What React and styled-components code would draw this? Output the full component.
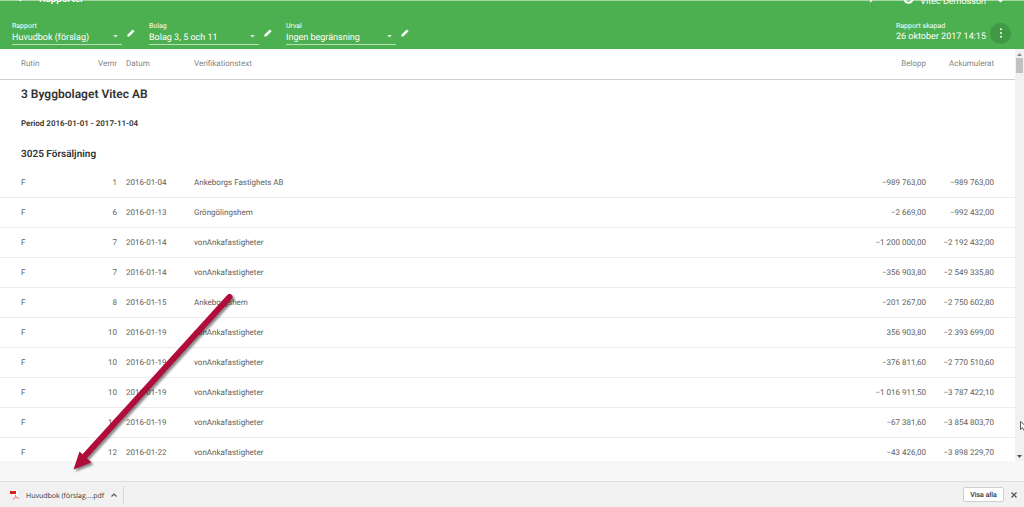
import React from 'react';
import styled, { createGlobalStyle } from 'styled-components';

const filters = [
  { id: 'rapport', label: 'Rapport', value: 'Huvudbok (förslag)' },
  { id: 'bolag', label: 'Bolag', value: 'Bolag 3, 5 och 11' },
  { id: 'urval', label: 'Urval', value: 'Ingen begränsning' },
];

const rows = [
  ['F', '1', '2016-01-04', 'Ankeborgs Fastighets AB', '−989 763,00', '−989 763,00'],
  ['F', '6', '2016-01-13', 'Gröngölingshem', '−2 669,00', '−992 432,00'],
  ['F', '7', '2016-01-14', 'vonAnkafastigheter', '−1 200 000,00', '−2 192 432,00'],
  ['F', '7', '2016-01-14', 'vonAnkafastigheter', '−356 903,80', '−2 549 335,80'],
  ['F', '8', '2016-01-15', 'Ankeborgshem', '−201 267,00', '−2 750 602,80'],
  ['F', '10', '2016-01-19', 'vonAnkafastigheter', '356 903,80', '−2 393 699,00'],
  ['F', '10', '2016-01-19', 'vonAnkafastigheter', '−376 811,60', '−2 770 510,60'],
  ['F', '10', '2016-01-19', 'vonAnkafastigheter', '−1 016 911,50', '−3 787 422,10'],
  ['F', '11', '2016-01-19', 'vonAnkafastigheter', '−67 381,60', '−3 854 803,70'],
  ['F', '12', '2016-01-22', 'vonAnkafastigheter', '−43 426,00', '−3 898 229,70'],
];

const App = () => {
  return (
    <Page>
      <GlobalStyle />
      <Header>
        <TopBar>
          <BackButton aria-label="Tillbaka">
            <svg width="9" height="9" viewBox="0 0 9 9" fill="none" stroke="#fff" strokeWidth="1.2">
              <path d="M8.500 4.500h-7M5 .8 1.300 4.500 5 8.200" />
            </svg>
          </BackButton>
          <PageTitle>Rapporter</PageTitle>
          <User>
            <UserChevron width="6" height="9" viewBox="0 0 6 9" fill="none" stroke="#fff" strokeWidth="1.2">
              <path d="M1 2l3 3-3 3" />
            </UserChevron>
            <UserIcon width="11" height="11" viewBox="0 0 11 11" fill="none" stroke="#fff" strokeWidth="2">
              <circle cx="5.5" cy="5.5" r="4.2" />
            </UserIcon>
            Vitec Demosson
            <UserCaret width="5" height="3" viewBox="0 0 5 3">
              <path d="M0 0h5L2.5 2.500z" fill="#fff" />
            </UserCaret>
          </User>
        </TopBar>
        <FilterBar>
          {filters.map((filter) => (
            <Filter key={filter.id}>
              <Field>
                <Label htmlFor={filter.id}>{filter.label}</Label>
                <SelectWrap>
                  <Select id={filter.id}>
                    <option>{filter.value}</option>
                  </Select>
                  <svg width="5" height="3" viewBox="0 0 5 3">
                    <path d="M0 0h5L2.5 2.5z" fill="#d3ecd4" />
                  </svg>
                </SelectWrap>
              </Field>
              <EditButton aria-label="Redigera">
                <svg width="8" height="8" viewBox="0 0 8 8" fill="#fff">
                  <path d="M.4 7.600V5.700L5.800.4 7.600 2.200 2.200 7.600z" />
                </svg>
              </EditButton>
            </Filter>
          ))}
          <Created>
            <Label as="span">Rapport skapad</Label>
            <CreatedDate>26 oktober 2017 14:15</CreatedDate>
          </Created>
          <MoreButton aria-label="Mer">
            <svg width="4" height="10" viewBox="0 0 4 10" fill="#fff">
              <circle cx="2" cy="1.3" r="1" />
              <circle cx="2" cy="5" r="1" />
              <circle cx="2" cy="8.7" r="1" />
            </svg>
          </MoreButton>
        </FilterBar>
      </Header>
      <Report>
        <TableArea>
          <Table>
            <colgroup>
              <Col $width="80px" />
              <Col $width="37px" />
              <Col $width="68px" />
              <Col />
              <Col $width="80px" />
              <Col $width="89px" />
            </colgroup>
            <thead>
              <tr>
                <Th>Rutin</Th>
                <Th $right>Vernr</Th>
                <Th>Datum</Th>
                <Th>Verifikationstext</Th>
                <Th $right>Belopp</Th>
                <Th $right>Ackumulerat</Th>
              </tr>
            </thead>
            <tbody>
              <tr>
                <Heading colSpan="6" $size="12px">3 Byggbolaget Vitec AB</Heading>
              </tr>
              <tr>
                <Heading colSpan="6" $size="8px">Period 2016-01-01 - 2017-11-04</Heading>
              </tr>
              <tr>
                <AccountHeading colSpan="6" $size="10px">3025 Försäljning</AccountHeading>
              </tr>
              {rows.map((row, i) => (
                <tr key={i}>
                  {row.map((cell, j) => (
                    <Td key={j} $right={j === 1 || j > 3}>
                      {cell}
                    </Td>
                  ))}
                </tr>
              ))}
            </tbody>
          </Table>
        </TableArea>
        <ScrollTrack>
          <svg width="5" height="3" viewBox="0 0 5 3">
            <path d="M0 3h5L2.5 0z" fill="#8a8a8a" />
          </svg>
          <Thumb />
          <svg width="5" height="3" viewBox="0 0 5 3">
            <path d="M0 0h5L2.5 3z" fill="#505050" />
          </svg>
        </ScrollTrack>
      </Report>
      <DownloadBar>
        <File href="#">
          <svg width="10" height="10" viewBox="0 0 10 10">
            <path d="M2 0h5l2 2v8H2z" fill="#fff" stroke="#d5d5d5" strokeWidth=".5" />
            <path d="M0 1h6v3H0z" fill="#d9201f" />
            <path d="M3 9c2-1 2.500-3 2.500-4 .3 2 1.500 3 3 3-2-.3-4 0-5.500 1z" fill="none" stroke="#e04a48" strokeWidth=".6" />
          </svg>
          <FileName>Huvudbok (förslag....pdf</FileName>
        </File>
        <FileMenu aria-label="Alternativ">
          <svg width="6" height="4" viewBox="0 0 6 4" fill="none" stroke="#555" strokeWidth="1.1">
            <path d="M.5 3.500 3 1l2.500 2.500" />
          </svg>
        </FileMenu>
        <ShowAll>Visa alla</ShowAll>
        <CloseButton aria-label="Stäng">
          <svg width="6" height="6" viewBox="0 0 6 6" stroke="#555" strokeWidth="1.3">
            <path d="M.5.5l5 5M5.500.5l-5 5" />
          </svg>
        </CloseButton>
      </DownloadBar>
      <Arrow width="176" height="190" viewBox="0 0 176 190">
        <path d="M159.500 10 14 170" stroke="#b00d3a" strokeWidth="6" strokeLinecap="round" />
        <path d="M3.500 182.500 9.500 164.500 21.500 175.500z" fill="#b00d3a" />
      </Arrow>
      <Cursor width="8" height="10" viewBox="0 0 8 10">
        <path d="M.5.5v8l2-1.800L4 9.500h1.500L4.500 6.300H7z" fill="#fff" stroke="#333" strokeWidth=".8" />
      </Cursor>
    </Page>
  );
};

const GlobalStyle = createGlobalStyle`
  * {
    box-sizing: border-box;
  }
  body {
    margin: 0;
    font-family: Roboto, 'Liberation Sans', sans-serif;
    font-size: 8px;
    color: #606060;
    text-rendering: geometricPrecision;
  }
  button, select {
    margin: 0;
    padding: 0;
    border: 0;
    background: none;
    font-family: inherit;
    text-rendering: inherit;
  }
`;

const Page = styled.div`
  position: relative;
  display: flex;
  flex-direction: column;
  height: 100vh;
  overflow: hidden;
  background: #f7f7f7;
`;

const Header = styled.header`
  background: #4caf50;
  box-shadow: inset 0 1px #a5d7a7;
  color: #fff;
`;

const TopBar = styled.div`
  display: flex;
  align-items: flex-end;
  height: 7px;
  padding: 0 21px 0 16px;
  overflow: hidden;
`;

const BackButton = styled.button`
  display: flex;
  margin-right: 14px;
  padding-bottom: 5px;
`;

const PageTitle = styled.div`
  font-size: 10px;
  font-weight: 500;
  line-height: 14px;
`;

const User = styled.div`
  display: flex;
  align-items: flex-end;
  margin-left: auto;
  font-size: 9px;
  line-height: 10px;
`;

const UserChevron = styled.svg`
  margin-bottom: 4px;
`;

const UserIcon = styled.svg`
  margin: 0 6px 3px 28px;
`;

const UserCaret = styled.svg`
  margin: 0 0 4px 12px;
`;

const FilterBar = styled.div`
  display: flex;
  align-items: center;
  height: 42px;
  padding: 10px 13px 0 12px;
`;

const Filter = styled.div`
  display: flex;
  align-items: center;
  gap: 5px;
  margin-right: 14px;
`;

const Field = styled.div`
  display: flex;
  flex-direction: column;
  width: 110px;
`;

const Label = styled.label`
  font-size: 7px;
  line-height: 8px;
`;

const SelectWrap = styled.div`
  display: flex;
  align-items: center;
  padding-right: 4px;
  border-bottom: 1px solid #b7dfb9;
`;

const Select = styled.select`
  flex: 1;
  height: 14px;
  padding-top: 2px;
  appearance: none;
  color: #fff;
  font-size: 9px;
`;

const EditButton = styled.button`
  display: flex;
  width: 8px;
`;

const Created = styled.div`
  display: flex;
  flex-direction: column;
  margin-left: auto;
`;

const CreatedDate = styled.span`
  font-size: 9px;
  line-height: 14px;
`;

const MoreButton = styled.button`
  display: flex;
  align-items: center;
  justify-content: center;
  width: 21px;
  height: 21px;
  margin-left: 4px;
  border-radius: 50%;
  background: #409944;
`;

const Report = styled.main`
  display: flex;
  flex: 1;
  min-height: 0;
  margin-bottom: 20px;
`;

const TableArea = styled.div`
  flex: 1;
  overflow: hidden;
  background: #fff;
`;

const Table = styled.table`
  width: 100%;
  table-layout: fixed;
  border-collapse: separate;
  border-spacing: 0;
`;

const Col = styled.col`
  width: ${({ $width }) => $width || 'auto'};
`;

const Td = styled.td`
  height: 30px;
  padding: 0 0 0 9px;
  border-bottom: 1px solid #ebebeb;
  text-align: ${({ $right }) => ($right ? 'right' : 'left')};
  white-space: nowrap;

  &:first-child {
    padding-left: 21px;
  }
  &:last-child {
    padding-right: 21px;
  }
`;

const Th = styled(Td).attrs({ as: 'th' })`
  height: 31px;
  padding-bottom: 2px;
  border-bottom: 1px solid #d0d0d0;
  color: #858585;
  font-weight: 400;
`;

const Heading = styled.th`
  height: 30px;
  padding: 0 21px 3px;
  color: #333;
  font-size: ${({ $size }) => $size};
  font-weight: 600;
  text-align: left;
`;

const AccountHeading = styled(Heading)`
  height: 28px;
  padding-bottom: 0;
`;

const ScrollTrack = styled.div`
  display: flex;
  flex-direction: column;
  align-items: center;
  width: 9px;
  padding: 4px 0 3px;
  background: #f1f1f1;
`;

const Thumb = styled.div`
  width: 7px;
  height: 15px;
  margin: 2px 0 auto;
  background: #c1c1c1;
`;

const DownloadBar = styled.footer`
  display: flex;
  align-items: center;
  height: 26px;
  padding: 0 7px 0 10px;
  border-top: 1px solid #dedede;
  background: #f1f1f1;
`;

const File = styled.a`
  display: flex;
  align-items: center;
  gap: 6px;
  color: #333;
  font-family: 'Open Sans', sans-serif;
  font-size: 7px;
  text-decoration: none;
`;

const FileName = styled.span`
  padding-top: 3px;
`;

const FileMenu = styled.button`
  display: flex;
  align-items: center;
  justify-content: center;
  width: 20px;
  height: 18px;
  border-right: 1px solid #d8d8d8;
`;

const ShowAll = styled.button`
  width: 41px;
  height: 15px;
  margin-left: auto;
  border: 1px solid #cfcfcf;
  border-radius: 2px;
  background: #fff;
  color: #333;
  font-size: 7px;
  font-weight: 500;
`;

const CloseButton = styled.button`
  display: flex;
  margin-left: 7px;
`;

const Arrow = styled.svg`
  position: absolute;
  left: 70px;
  top: 287px;
  filter: drop-shadow(2px 2px 1px rgba(0, 0, 0, 0.45));
  pointer-events: none;
`;

const Cursor = styled.svg`
  position: absolute;
  right: -4px;
  top: 421px;
`;

export default App;
